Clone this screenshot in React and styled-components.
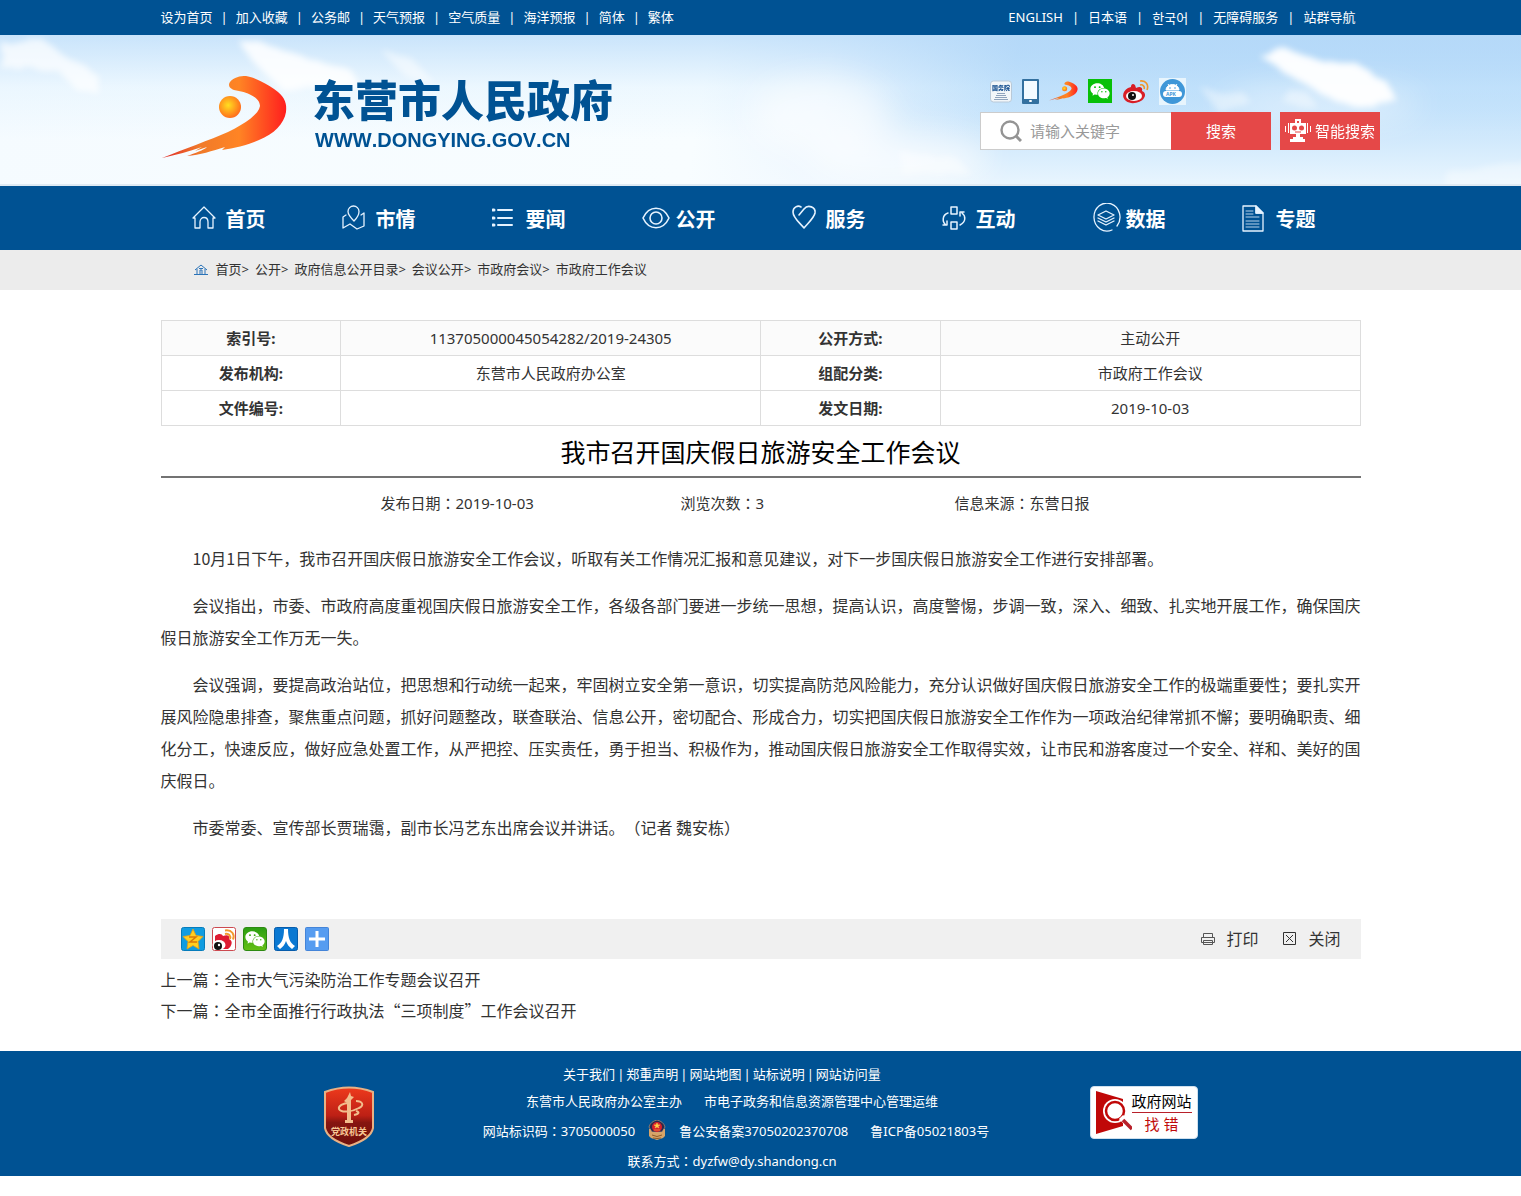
import React from 'react';
import styled, { createGlobalStyle } from 'styled-components';
import { AiFillWechat } from 'react-icons/ai';

const GlobalStyle = createGlobalStyle`
  * {
    box-sizing: border-box;
  }

  body {
    margin: 0;
    background: #fff;
    color: #333;
    font-family: "Noto Sans", "Noto Sans CJK SC", sans-serif;
    font-size: 15px;
    text-spacing-trim: space-all;
  }

  a {
    color: inherit;
    text-decoration: none;
  }

  svg {
    display: block;
    flex: none;
  }
`;

const Container = styled.div`
  max-width: 1200px;
  margin: 0 auto;
`;

// Full-width colon set in the middle of its cell
const ColonMark = styled.span`
  font-family: "Noto Sans CJK TC", sans-serif;
`;

const Colon = () => <ColonMark lang="zh-TW">：</ColonMark>;

// Top bar
const TopBar = styled.div`
  background: #005293;
  color: #fff;
  font-size: 13px;
  line-height: 35px;
`;

const TopInner = styled(Container)`
  display: flex;
  justify-content: space-between;
  padding-right: 5px;
`;

const LinkList = styled.div`
  display: flex;
`;

const Sep = styled.span`
  padding: 0 ${(p) => (p.$wide ? 9 : 8)}px;
`;

const KoreanLink = styled.a`
  font-family: "Noto Sans CJK KR", sans-serif;
`;

// Header
const Header = styled.header`
  position: relative;
  overflow: hidden;
  border-bottom: 2px solid #dfeaf3;
  background:
    linear-gradient(to bottom, rgba(190, 222, 250, 0.8), rgba(220, 240, 254, 0.4) 35%, rgba(240, 250, 255, 0) 70%),
    linear-gradient(100deg, #f5fbff 0%, #f8fdff 46%, rgba(244, 250, 255, 0.8) 54%, rgba(240, 248, 254, 0) 66%),
    linear-gradient(to bottom, #93c5f4, #add6f9 35%, #cde7fc 65%, #e8f5fe);
`;

const Clouds = styled.svg`
  position: absolute;
  top: 0;
  left: 0;
  width: 100%;
  height: 100%;
`;

const HeaderInner = styled.div`
  position: relative;
  display: flex;
  justify-content: space-between;
  max-width: 1239px;
  height: 149px;
  margin: 0 auto;
  padding-left: 21px;
`;

const Brand = styled.a`
  display: flex;
  gap: 24px;
  padding-top: 32px;
  color: #005293;

  svg {
    margin-top: 9px;
  }
`;

const SiteName = styled.div`
  font: 900 43px/62px "Noto Sans CJK SC", sans-serif;
`;

const SiteUrl = styled.div`
  padding-left: 3px;
  font: bold 20px/22px "Liberation Sans", Arial, sans-serif;
  font-kerning: none;
`;

const HeaderTools = styled.div`
  padding-top: 43px;
`;

const IconRow = styled.div`
  display: flex;
  align-items: center;
  gap: 10px;
  height: 26px;
  margin-bottom: 8px;
  padding-left: 10px;

  a {
    display: block;
  }
`;

const SearchForm = styled.form`
  display: flex;
  height: 38px;
`;

const SearchField = styled.label`
  display: flex;
  align-items: center;
  gap: 8px;
  width: 191px;
  padding-left: 19px;
  background: #fff;
  border: 1px solid #ccc;
  border-right: 0;
`;

const SearchInput = styled.input`
  width: 130px;
  padding: 0;
  border: 0;
  outline: 0;
  background: none;
  font: 15px/20px "Noto Sans", "Noto Sans CJK SC", sans-serif;

  &::placeholder {
    color: #999;
    opacity: 1;
  }
`;

const RedButton = styled.button`
  display: flex;
  align-items: center;
  justify-content: center;
  gap: 4px;
  width: 100px;
  margin-left: ${(p) => (p.$gap ? '9px' : 0)};
  padding: 0;
  border: 0;
  background: #e54848;
  color: #fff;
  font: 15px/20px "Noto Sans", "Noto Sans CJK SC", sans-serif;
  cursor: pointer;
`;

// Navigation
const Nav = styled.nav`
  background: #005293;
`;

const NavInner = styled(Container)`
  display: grid;
  grid-template-columns: repeat(8, 1fr);
`;

const NavItem = styled.a`
  display: grid;
  grid-template-columns: 34px auto;
  align-items: center;
  height: 64px;
  padding-left: 31px;
  color: #fff;
  font-size: 20px;
  font-weight: bold;
  line-height: 30px;

  span {
    padding-top: 4px;
  }
`;

const Crumbs = styled.div`
  padding-bottom: 1px;
  background: #ececec;
  font-size: 13px;
  line-height: 39px;
`;

const CrumbsInner = styled(Container)`
  display: flex;
  align-items: center;
  gap: 6px;
  padding-left: 33px;

  svg {
    margin-right: 2px;
  }
`;

// Article
const Main = styled.main`
  max-width: 1200px;
  margin: 0 auto;
  padding: 30px 0 25px;
`;

const InfoTable = styled.table`
  width: 100%;
  table-layout: fixed;
  border-collapse: collapse;
  line-height: 34px;
  text-align: center;

  tr:first-child {
    background: #fbfbfb;
  }

  th,
  td {
    height: 35px;
    padding: 0;
    border: 1px solid #ddd;
  }

  th {
    width: 15%;
  }

  td {
    width: 35%;
  }
`;

const Title = styled.h1`
  margin: 0;
  padding: 3px 0 1px;
  border-bottom: 2px solid #737373;
  color: #000;
  font-size: 25px;
  font-weight: normal;
  line-height: 46px;
  text-align: center;
`;

const Meta = styled.div`
  display: grid;
  grid-template-columns: 300px 274px auto;
  padding: 10px 0 24px 220px;
  line-height: 30px;
`;

const Article = styled.article`
  min-height: 377px;
  font-family: "Noto Sans CJK SC", sans-serif;
  font-size: 16px;
  line-height: 32px;

  p {
    margin: 0 0 15px;
    text-indent: 2em;
  }
`;

const ShareBar = styled.div`
  display: flex;
  align-items: center;
  justify-content: space-between;
  height: 40px;
  padding: 0 20px;
  background: #f0f0f0;
`;

const ShareLinks = styled.div`
  display: flex;
  gap: 7px;
`;

const Actions = styled.div`
  display: flex;
  gap: 25px;
`;

const ActionButton = styled.button`
  display: flex;
  align-items: center;
  gap: 11px;
  padding: 0;
  border: 0;
  background: none;
  color: #333;
  font: 16px/24px "Noto Sans", "Noto Sans CJK SC", sans-serif;
  cursor: pointer;
`;

const Siblings = styled.div`
  padding-top: 5px;
  font-family: "Noto Sans CJK SC", sans-serif;
  font-size: 16px;
  line-height: 31px;
`;

// Footer
const Footer = styled.footer`
  margin-bottom: 20px;
  background: #005293;
  color: #fff;
  font-size: 13px;
`;

const FooterInner = styled(Container)`
  display: flex;
  align-items: flex-start;
  padding: 0 163px 0 162px;
`;

const FooterText = styled.div`
  flex: 1;
  padding: 9px 0 2px;
`;

const FooterRow = styled.div`
  display: flex;
  align-items: center;
  justify-content: center;
  gap: ${(p) => p.$gap || 0}px;
  height: ${(p) => p.$height}px;
`;

const FooterLinks = styled(FooterRow)`
  padding-right: 20px;

  span {
    padding: 0 2px;
  }
`;

const RecordRow = styled(FooterRow)`
  padding-left: 8px;
`;

const PoliceMark = styled.span`
  display: flex;
  align-items: center;
  gap: 13px;
`;

const FooterBadge = styled.a`
  display: block;
  padding-top: 35px;
`;

const ErrorBadge = styled.span`
  display: flex;
  align-items: center;
  width: 108px;
  height: 53px;
  padding-left: 5px;
  background: #fff;
  border: 1px solid #cfe0ee;
  border-radius: 4px;
  color: #000;
  font-size: 15px;
  line-height: 20px;
  text-align: center;
`;

const ErrorText = styled.span`
  display: block;
  padding-bottom: 1px;
  border-bottom: 1px solid #b8202a;

  & + & {
    padding: 1px 0 0;
    border: 0;
    color: #c00a0a;
  }
`;

// Drawings
const Swoosh = ({ id, width, height }) => (
  <svg width={width} height={height} viewBox="0 0 126 82" aria-hidden="true">
    <defs>
      <linearGradient id={`${id}-body`} x1="0" x2="1">
        <stop offset="0" stopColor="#e02a2a" />
        <stop offset="0.3" stopColor="#f07a2a" />
        <stop offset="0.62" stopColor="#ff8424" />
        <stop offset="1" stopColor="#ff1e1e" />
      </linearGradient>
      <radialGradient id={`${id}-ball`} cx="0.42" cy="0.42" r="0.6">
        <stop offset="0" stopColor="#ffdf20" />
        <stop offset="1" stopColor="#ff6c1c" />
      </radialGradient>
    </defs>
    <path
      d="M68 6 C72 1 78 0 84 0 C92 1 106 8 116 16 C123 22 125 28 124 36 C122 48 112 58 97 64 C84 70 72 72 60 74 L63 71 C50 75 38 79 25 80 C33 77 42 74 45 71 L33 75 L40 71 C28 75 14 79 0 82 C22 73 48 64 66 56 C84 47 97 38 98 30 C98 21 85 16 72 14 C67 12 66 9 68 6 Z"
      fill={`url(#${id}-body)`}
    />
    <circle cx="68" cy="31" r="11" fill={`url(#${id}-ball)`} />
  </svg>
);

const StateCouncilIcon = () => (
  <svg width="22" height="23" viewBox="0 0 22 23" aria-hidden="true">
    <rect x="0.5" y="1" width="21" height="21" rx="3" fill="#f2f6f9" stroke="#b9c9d8" />
    <text x="11" y="10" fontSize="6" fontWeight="900" textAnchor="middle" fill="#164f8f">国务院</text>
    <path d="M7 13.500h8M6 15.500h10M5 17.500h12M4 19.500h14" stroke="#8fa3bc" />
  </svg>
);

const PhoneIcon = () => (
  <svg width="17" height="25" viewBox="0 0 17 25" aria-hidden="true">
    <rect width="17" height="25" rx="1" fill="#33709f" />
    <rect x="2" y="2" width="13" height="18" fill="#f3faff" />
    <rect x="7" y="21" width="3" height="2" rx="1" fill="#fff" />
  </svg>
);

const WechatBox = styled.span`
  display: flex;
  align-items: center;
  justify-content: center;
  width: 24px;
  height: 24px;
  border-radius: ${(p) => (p.$round ? '3px' : 0)};
  border: ${(p) => (p.$round ? '1px solid #2d8a12' : 0)};
  background: ${(p) => (p.$round ? 'linear-gradient(#2c9f12, #63bf16)' : '#08c008')};
  color: #fff;
`;

const WeiboIcon = () => (
  <svg width="27" height="25" viewBox="0 0 27 25" aria-hidden="true">
    <path
      d="M9 8 C9 5 11 4 13 6 L14 9 C18 7 21 8 20 12 C23 13 24 16 22 19 C19 24 9 26 4 22 C-1 18 1 12 6 9 Z"
      fill="#d81e26"
    />
    <ellipse cx="12" cy="17" rx="8" ry="5" fill="#fff" />
    <circle cx="10" cy="17" r="4" fill="#111" />
    <circle cx="11" cy="16" r="1" fill="#fff" />
    <path d="M18 6 C21 5 23 8 22 10 M18 2 C24 1 27 6 25 11" fill="none" stroke="#f0962a" strokeWidth="1.6" />
  </svg>
);

const ApkIcon = () => (
  <svg width="27" height="27" viewBox="0 0 27 27" aria-hidden="true">
    <rect width="27" height="27" fill="#e8f5fd" />
    <circle cx="13.5" cy="13.5" r="12.5" fill="#3f97d8" />
    <path d="M7 12a6.5 5.5 0 0 1 13 0zM9 6l2 3M18 6l-2 3" fill="#fff" stroke="#fff" />
    <circle cx="11" cy="10" r="0.8" fill="#3f97d8" />
    <circle cx="16" cy="10" r="0.8" fill="#3f97d8" />
    <rect x="4" y="13" width="19" height="6" rx="3" fill="#fff" />
    <text x="12" y="18" fontSize="5" fontWeight="bold" textAnchor="middle" fill="#3f97d8">APK</text>
  </svg>
);

const SearchIcon = () => (
  <svg width="22" height="22" viewBox="0 0 22 22" fill="none" stroke="#949494" aria-hidden="true">
    <circle cx="10" cy="10" r="8.5" strokeWidth="2.4" />
    <path d="M16 16l5 5" strokeWidth="3" />
  </svg>
);

const RobotIcon = () => (
  <svg width="26" height="24" viewBox="0 0 26 24" aria-hidden="true">
    <path d="M10 0h6v4h5v11h-6v3h3v2h2v3H5v-3h3v-2h3v-3H5V4h5z" fill="#fff" />
    <path d="M12 2h2v2h-2z" fill="#e54848" />
    <circle cx="9.5" cy="9" r="2.5" fill="#e54848" />
    <circle cx="16.5" cy="9" r="2.5" fill="#e54848" />
    <path d="M10 13h6" stroke="#e54848" />
    <path d="M.5 7v6M3.500 4v10M22.500 4v10M25.500 7v6" stroke="#fff" />
  </svg>
);

const NavSvg = ({ width = 25, children }) => (
  <svg
    width={width}
    height="30"
    viewBox={`0 0 ${width} 30`}
    fill="none"
    stroke="#e6f3ff"
    strokeWidth="1.3"
    strokeLinecap="round"
    strokeLinejoin="round"
    aria-hidden="true"
  >
    {children}
  </svg>
);

const navItems = [
  {
    label: '首页',
    icon: (
      <NavSvg>
        <path d="M1 15L12 4l11 11h-2v10h-5v-6c0-6-8-6-8 0v6H3V15z" />
      </NavSvg>
    ),
  },
  {
    label: '市情',
    icon: (
      <NavSvg>
        <path d="M12 18c-3-3-6-6-6-9.500a5.500 5.500 0 0 1 11 0c0 3.500-2 6.500-5 9.500zM4 12l-3 2v11l7-4 7 5 7-3V10l-3 2" />
      </NavSvg>
    ),
  },
  {
    label: '要闻',
    icon: (
      <NavSvg>
        <path d="M6 7h14M6 15h14M6 22h14" strokeWidth="2" />
        <path d="M1 7h1M1 15h1M1 22h1" strokeWidth="3" />
      </NavSvg>
    ),
  },
  {
    label: '公开',
    icon: (
      <NavSvg width={28}>
        <path d="M1 15C7 2 21 2 27 15C21 28 7 28 1 15z" strokeWidth="1.6" />
        <circle cx="14" cy="15" r="6" strokeWidth="1.6" />
      </NavSvg>
    ),
  },
  {
    label: '服务',
    icon: (
      <NavSvg>
        <path d="M7 12l5-6c4-5 12-2 11 4-1 5-7 10-11 15C8 20 1 15 1 9c0-5 5-7 8-5" strokeWidth="1.6" />
      </NavSvg>
    ),
  },
  {
    label: '互动',
    icon: (
      <NavSvg>
        <path d="M9 4h6v7H9zM9 19h6v7H9zM6 10c-6 2-6 9-2 12M1 22h4v-4M18 22c6-3 6-9 2-12M18 13v-4h4" strokeWidth="1.5" />
      </NavSvg>
    ),
  },
  {
    label: '数据',
    icon: (
      <NavSvg width={29}>
        <path d="M25 23A13 14 0 1 0 20 27" />
        <path d="M14 8l8 4-8 4-8-4zM6 15l8 4 8-4M6 18l8 4 8-4" />
      </NavSvg>
    ),
  },
  {
    label: '专题',
    icon: (
      <NavSvg>
        <path d="M1 3h13l7 7v18H1zM14 3v7h7" />
        <path d="M4 8h7M4 11h7M4 14h13M4 18h13M4 21h13M4 24h13" strokeWidth="1" opacity="0.8" />
        <path d="M14 3l7 7h-7z" fill="#e6f3ff" />
      </NavSvg>
    ),
  },
];

const CrumbHome = () => (
  <svg width="14" height="11" viewBox="0 0 14 11" fill="none" stroke="#2a73b8" aria-hidden="true">
    <path d="M1 6l6-5 6 5M3 5v5M11 5v5M0 10.500h14M6 10V6h2v4M5 4.500h4" />
  </svg>
);

const QzoneIcon = () => (
  <svg width="24" height="24" viewBox="0 0 24 24" aria-hidden="true">
    <rect x="0.5" y="0.5" width="23" height="23" rx="2" fill="#109ce0" stroke="#067cbb" />
    <path d="M12 2l3 6.500 7 1-5 5 1 7.500-6-3.500L6 22l1-7.500-5-5 7-1z" fill="#ffcf20" stroke="#e89d12" strokeWidth="0.8" />
    <path d="M8 10h7l-6 5h7" fill="none" stroke="#d87808" strokeWidth="1.500" />
  </svg>
);

const WeiboShareIcon = () => (
  <svg width="24" height="24" viewBox="0 0 24 24" aria-hidden="true">
    <rect x="0.5" y="0.5" width="23" height="23" rx="2" fill="#fff" stroke="#cc4a50" />
    <path d="M3 9c4-3 7-2 8 0 5-2 7 0 6 3 5 2 2 8-1 10H3z" fill="#de1b32" />
    <ellipse cx="7" cy="18" rx="6.500" ry="5" fill="#fff" />
    <circle cx="6" cy="19" r="4" fill="#111" />
    <circle cx="7" cy="18" r="1.200" fill="#fff" />
    <path d="M13 7c4-1 6 2 5 5M13 3.500c7-1 10 4 8 9" fill="none" stroke="#f3992c" strokeWidth="2" />
  </svg>
);

const RenrenIcon = () => (
  <svg width="24" height="24" viewBox="0 0 24 24" aria-hidden="true">
    <rect x="0.5" y="0.5" width="23" height="23" rx="2" fill="#0a78d2" stroke="#075cab" />
    <path d="M10 2h4c0 9 2 14 7 17l-3 3c-3-2-5-5-6-8-1 3-3 6-6 8l-3-3c5-3 7-8 7-17z" fill="#fff" />
  </svg>
);

const PlusIcon = () => (
  <svg width="24" height="24" viewBox="0 0 24 24" aria-hidden="true">
    <rect x="0.5" y="0.5" width="23" height="23" rx="1" fill="#569cf0" stroke="#4484d8" />
    <path d="M12 4v16M4 12h16" stroke="#fff" strokeWidth="3" />
  </svg>
);

const PrintIcon = () => (
  <svg width="14" height="14" viewBox="0 0 14 14" fill="none" stroke="#555" aria-hidden="true">
    <path d="M2.500 5.500v-4h9v4M2.500 10.500h-2v-5h13v5h-2M2.500 8.500h9v4h-9zM2 10.500h10" />
  </svg>
);

const CloseIcon = () => (
  <svg width="14" height="14" viewBox="0 0 14 14" fill="none" stroke="#333" aria-hidden="true">
    <path d="M0.500 0.500h12v12h-12zM3 3l7 7M10 3l-7 7" />
  </svg>
);

const PartyBadge = () => (
  <svg width="52" height="62" viewBox="0 0 52 62" aria-hidden="true">
    <defs>
      <linearGradient id="party" x2="0" y2="1">
        <stop offset="0" stopColor="#ee3a1c" />
        <stop offset="0.48" stopColor="#bd2015" />
        <stop offset="0.6" stopColor="#861510" />
        <stop offset="1" stopColor="#6e100c" />
      </linearGradient>
    </defs>
    <path d="M2 6Q26-3 50 6v36q-2 11-24 18Q4 53 2 42z" fill="url(#party)" stroke="#e9b184" strokeWidth="2" />
    <path d="M24 12l3-6 1 4 3 1-3 3v20h2v3h-8v-3h2V17l-3-2z" fill="#f2bd8c" />
    <path
      d="M33 15c6 0 9 4 3 7-7 4-18 5-20 1-1-3 4-6 10-6M33 25c4 1 3 3-2 4"
      fill="none"
      stroke="#f2bd8c"
      strokeWidth="2"
    />
    <text x="26" y="49" fontSize="9" fontWeight="bold" textAnchor="middle" fill="#f7c795">党政机关</text>
  </svg>
);

const PoliceIcon = () => (
  <svg width="18" height="20" viewBox="0 0 18 20" aria-hidden="true">
    <path d="M1 9h16v7l-2 2-6 2-6-2-2-2z" fill="#d6a468" />
    <path d="M4 15q5 3 10 0M5 18q4 1 8 0" fill="none" stroke="#8d5a2a" />
    <path d="M9 0c4 1 7 3 8 7l-3 5H4L1 7c1-4 4-6 8-7z" fill="#2b2a4c" stroke="#c9a27c" strokeWidth="0.6" />
    <circle cx="9" cy="7" r="5" fill="#d8202a" />
    <path d="M9 3l1 2h2l-2 1 1 2-2-1-2 1 1-2-2-1h2zM6 10h6" fill="#ffd24a" stroke="#ffd24a" strokeWidth="0.5" />
  </svg>
);

const FindErrorIcon = () => (
  <svg width="36" height="44" viewBox="0 0 36 44" aria-hidden="true">
    <path d="M0 0l27 8v27L0 43z" fill="#c00808" />
    <circle cx="19" cy="20" r="12" fill="#fff" />
    <circle cx="19" cy="20" r="9" fill="#fff" stroke="#c00808" strokeWidth="2.500" />
    <path d="M25 26l4 4" stroke="#fff" strokeWidth="6" />
    <path d="M27 29l9 9" stroke="#b8202a" strokeWidth="3.500" />
  </svg>
);

const topLeft = ['设为首页', '加入收藏', '公务邮', '天气预报', '空气质量', '海洋预报', '简体', '繁体'];
const crumbs = ['首页', '公开', '政府信息公开目录', '会议公开', '市政府会议', '市政府工作会议'];
const footerLinks = ['关于我们', '郑重声明', '网站地图', '站标说明', '网站访问量'];

const infoRows = [
  ['索引号:', '113705000045054282/2019-24305', '公开方式:', '主动公开'],
  ['发布机构:', '东营市人民政府办公室', '组配分类:', '市政府工作会议'],
  ['文件编号:', '', '发文日期:', '2019-10-03'],
];

const paragraphs = [
  '10月1日下午，我市召开国庆假日旅游安全工作会议，听取有关工作情况汇报和意见建议，对下一步国庆假日旅游安全工作进行安排部署。',
  '会议指出，市委、市政府高度重视国庆假日旅游安全工作，各级各部门要进一步统一思想，提高认识，高度警惕，步调一致，深入、细致、扎实地开展工作，确保国庆假日旅游安全工作万无一失。',
  '会议强调，要提高政治站位，把思想和行动统一起来，牢固树立安全第一意识，切实提高防范风险能力，充分认识做好国庆假日旅游安全工作的极端重要性；要扎实开展风险隐患排查，聚焦重点问题，抓好问题整改，联查联治、信息公开，密切配合、形成合力，切实把国庆假日旅游安全工作作为一项政治纪律常抓不懈；要明确职责、细化分工，快速反应，做好应急处置工作，从严把控、压实责任，勇于担当、积极作为，推动国庆假日旅游安全工作取得实效，让市民和游客度过一个安全、祥和、美好的国庆假日。',
  '市委常委、宣传部长贾瑞霭，副市长冯艺东出席会议并讲话。（记者 魏安栋）',
];

const CloudLayer = () => (
  <Clouds viewBox="0 0 1521 149" preserveAspectRatio="none" aria-hidden="true">
    <defs>
      <filter id="soft" x="-20%" y="-40%" width="140%" height="180%">
        <feTurbulence type="fractalNoise" baseFrequency="0.03 0.06" numOctaves="3" seed="4" />
        <feDisplacementMap in="SourceGraphic" scale="16" />
        <feGaussianBlur stdDeviation="3" />
      </filter>
      <filter id="haze" x="-30%" y="-60%" width="160%" height="220%">
        <feGaussianBlur stdDeviation="16" />
      </filter>
    </defs>
    <g fill="#fff" filter="url(#haze)">
      <ellipse cx="820" cy="80" rx="70" ry="36" opacity="0.6" />
      <ellipse cx="900" cy="125" rx="90" ry="24" opacity="0.6" />
      <ellipse cx="1320" cy="70" rx="100" ry="20" opacity="0.4" />
    </g>
    <g fill="#fff" filter="url(#soft)">
      <path d="M0 6l40-4 20 16 36 20 4 22-24-6-22-22-52 2z" opacity="0.7" />
      <path d="M236 4l34 4 28 14 52 12 8 16-34 6-44-4-22-20z" opacity="0.85" />
      <path d="M380 14l34 12 22 24-36-14z" opacity="0.5" />
      <path d="M1260 22l24-8 40 12 34 4 24 12 16 24-20 10-48-12-34-20z" opacity="0.95" />
      <path d="M1200 52l46 8 8 12-34 6z" opacity="0.4" />
      <path d="M1288 54l20 4 8 14-34-4z" opacity="0.4" />
      <path d="M1446 142l40-12 45-4v27h-85z" opacity="0.35" />
      <path d="M900 114l60 12 12 14-70 2z" opacity="0.4" />
    </g>
  </Clouds>
);

const App = () => (
  <div lang="zh-CN">
    <GlobalStyle />

    <TopBar>
      <TopInner>
        <LinkList>
          {topLeft.map((label, i) => (
            <React.Fragment key={label}>
              {i > 0 && <Sep>|</Sep>}
              <a href="#">{label}</a>
            </React.Fragment>
          ))}
        </LinkList>
        <LinkList>
          <a href="#">ENGLISH</a>
          <Sep $wide>|</Sep>
          <a href="#">日本语</a>
          <Sep $wide>|</Sep>
          <KoreanLink href="#" lang="ko">한국어</KoreanLink>
          <Sep $wide>|</Sep>
          <a href="#">无障碍服务</a>
          <Sep $wide>|</Sep>
          <a href="#">站群导航</a>
        </LinkList>
      </TopInner>
    </TopBar>

    <Header>
      <CloudLayer />
      <HeaderInner>
        <Brand href="#">
          <Swoosh id="logo" width="126" height="82" />
          <div>
            <SiteName>东营市人民政府</SiteName>
            <SiteUrl>WWW.DONGYING.GOV.CN</SiteUrl>
          </div>
        </Brand>
        <HeaderTools>
          <IconRow>
            <a href="#" aria-label="国务院"><StateCouncilIcon /></a>
            <a href="#" aria-label="手机版"><PhoneIcon /></a>
            <a href="#" aria-label="东营"><Swoosh id="mini" width="29" height="20" /></a>
            <a href="#" aria-label="微信"><WechatBox><AiFillWechat size={22} /></WechatBox></a>
            <a href="#" aria-label="微博"><WeiboIcon /></a>
            <a href="#" aria-label="APK"><ApkIcon /></a>
          </IconRow>
          <SearchForm>
            <SearchField>
              <SearchIcon />
              <SearchInput type="text" placeholder="请输入关键字" aria-label="搜索" />
            </SearchField>
            <RedButton type="button">搜索</RedButton>
            <RedButton type="button" $gap>
              <RobotIcon />
              智能搜索
            </RedButton>
          </SearchForm>
        </HeaderTools>
      </HeaderInner>
    </Header>

    <Nav>
      <NavInner>
        {navItems.map((item) => (
          <NavItem key={item.label} href="#">
            {item.icon}
            <span>{item.label}</span>
          </NavItem>
        ))}
      </NavInner>
    </Nav>

    <Crumbs>
      <CrumbsInner>
        <CrumbHome />
        {crumbs.map((label, i) => (
          <span key={label}>
            <a href="#">{label}</a>
            {i < crumbs.length - 1 && '>'}
          </span>
        ))}
      </CrumbsInner>
    </Crumbs>

    <Main>
      <InfoTable>
        <tbody>
          {infoRows.map(([k1, v1, k2, v2]) => (
            <tr key={k1}>
              <th scope="row">{k1}</th>
              <td>{v1}</td>
              <th scope="row">{k2}</th>
              <td>{v2}</td>
            </tr>
          ))}
        </tbody>
      </InfoTable>

      <Title>我市召开国庆假日旅游安全工作会议</Title>
      <Meta>
        <span>发布日期<Colon />2019-10-03</span>
        <span>浏览次数<Colon />3</span>
        <span>信息来源<Colon />东营日报</span>
      </Meta>

      <Article>
        {paragraphs.map((text) => (
          <p key={text}>{text}</p>
        ))}
      </Article>

      <ShareBar>
        <ShareLinks>
          <a href="#" aria-label="QQ空间"><QzoneIcon /></a>
          <a href="#" aria-label="新浪微博"><WeiboShareIcon /></a>
          <a href="#" aria-label="微信"><WechatBox $round><AiFillWechat size={22} /></WechatBox></a>
          <a href="#" aria-label="人人网"><RenrenIcon /></a>
          <a href="#" aria-label="更多"><PlusIcon /></a>
        </ShareLinks>
        <Actions>
          <ActionButton type="button"><PrintIcon />打印</ActionButton>
          <ActionButton type="button"><CloseIcon />关闭</ActionButton>
        </Actions>
      </ShareBar>

      <Siblings>
        <div>上一篇<Colon /><a href="#">全市大气污染防治工作专题会议召开</a></div>
        <div>下一篇<Colon /><a href="#">全市全面推行行政执法“三项制度”工作会议召开</a></div>
      </Siblings>
    </Main>

    <Footer>
      <FooterInner>
        <FooterBadge href="#" aria-label="党政机关"><PartyBadge /></FooterBadge>
        <FooterText>
          <FooterLinks $height={27}>
            {footerLinks.map((label, i) => (
              <React.Fragment key={label}>
                {i > 0 && <span>|</span>}
                <a href="#">{label}</a>
              </React.Fragment>
            ))}
          </FooterLinks>
          <FooterRow $height={27} $gap={22}>
            <span>东营市人民政府办公室主办</span>
            <span>市电子政务和信息资源管理中心管理运维</span>
          </FooterRow>
          <RecordRow $height={32} $gap={22}>
            <PoliceMark>
              <span>网站标识码<Colon />3705000050</span>
              <PoliceIcon />
              <a href="#">鲁公安备案37050202370708</a>
            </PoliceMark>
            <a href="#">鲁ICP备05021803号</a>
          </RecordRow>
          <FooterRow $height={28}>
            <span>联系方式<Colon />dyzfw@dy.shandong.cn</span>
          </FooterRow>
        </FooterText>
        <FooterBadge href="#">
          <ErrorBadge>
            <FindErrorIcon />
            <span>
              <ErrorText>政府网站</ErrorText>
              <ErrorText>找 错</ErrorText>
            </span>
          </ErrorBadge>
        </FooterBadge>
      </FooterInner>
    </Footer>
  </div>
);

export default App;
